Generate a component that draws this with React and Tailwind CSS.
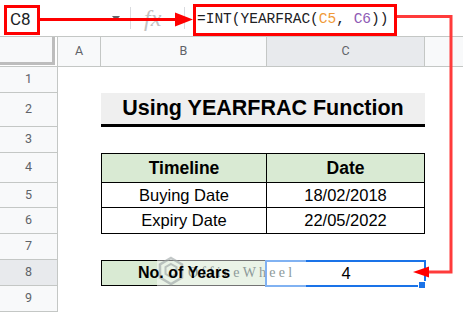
import React from "react";

function Row({ n, h, active, children }) {
  return (
    <div className={`flex ${h}`}>
      <div
        className={`w-[58px] shrink-0 flex items-center justify-center border-r border-b border-[#c4c7c5] font-['Roboto',sans-serif] text-[12.5px] text-[#5f6368] ${
          active ? "bg-[#e8eaed]" : "bg-[#f8f9fa]"
        }`}
      >
        {n}
      </div>
      <div className="w-[43px] shrink-0" />
      {children}
    </div>
  );
}

const App = () => {
  return (
    <div className="relative w-[463px] h-[313px] overflow-hidden bg-white font-['Liberation_Sans',Arial,sans-serif] text-black">
      {/* Formula bar */}
      <div className="flex h-[37px] border-b border-[#c4c7c5]">
        <div className="ml-[4px] mt-[5px] w-[36px] h-[30px] shrink-0 border-[3px] border-[#ff0000] flex items-center pl-[3px] font-['Roboto',sans-serif] text-[17px] text-[#202124]">
          C8
        </div>
        <div className="w-[90px] shrink-0 flex items-center justify-end pr-[10px]">
          <div className="w-0 h-0 border-x-[4px] border-x-transparent border-t-[5px] border-t-[#5f6368]" />
        </div>
        <div className="w-px h-[22px] self-center bg-[#dadce0]" />
        <div className="w-[53px] shrink-0 flex items-center pl-[13px] font-['Liberation_Serif',serif] italic text-[24px] text-[#c2c2c2]">
          fx
        </div>
        <div className="w-px h-[22px] self-center bg-[#dadce0]" />
        <div className="ml-[8px] mt-[4px] w-[204px] h-[32px] shrink-0 border-[3px] border-[#ff0000] flex items-center pl-[1px] font-['Liberation_Mono',monospace] text-[14.5px] text-[#202124] whitespace-pre">
          {"=INT(YEARFRAC("}
          <span className="text-[#f09a37]">C5</span>
          {", "}
          <span className="text-[#8e5bb5]">C6</span>
          {"))"}
        </div>
      </div>

      {/* Column headers */}
      <div className="flex h-[30px] border-b border-[#c4c7c5] font-['Roboto',sans-serif] text-[12.5px] text-[#5f6368]">
        <div className="w-[58px] shrink-0 border-r border-[#c4c7c5] bg-white">
          <div className="w-[55px] h-[28px] bg-[#f8f9fa] border-r-[3px] border-b-[3px] border-[#bdbdbd]" />
        </div>
        <div className="w-[43px] shrink-0 border-r border-[#c4c7c5] bg-[#f8f9fa] flex items-center justify-center">A</div>
        <div className="w-[166px] shrink-0 border-r border-[#c4c7c5] bg-[#f8f9fa] flex items-center justify-center">B</div>
        <div className="w-[158px] shrink-0 border-r border-[#c4c7c5] bg-[#e8eaed] flex items-center justify-center">C</div>
        <div className="flex-1 bg-[#f8f9fa]" />
      </div>

      <Row n={1} h="h-[26px]" />
      <Row n={2} h="h-[34px]">
        <div className="w-[324px] shrink-0 flex items-center justify-center bg-[#efefef] border-b-[3px] border-black font-bold text-[21.5px]">
          Using YEARFRAC Function
        </div>
      </Row>
      <Row n={3} h="h-[26px]" />
      <Row n={4} h="h-[30px]">
        <div className="w-[166px] shrink-0 flex items-center justify-center border border-black bg-[#d9ead3] font-bold text-[17.5px]">
          Timeline
        </div>
        <div className="w-[158px] shrink-0 flex items-center justify-center border-y border-r border-black bg-[#d9ead3] font-bold text-[17.5px]">
          Date
        </div>
      </Row>
      <Row n={5} h="h-[25px]">
        <div className="w-[166px] shrink-0 flex items-center justify-center border-x border-b border-black text-[16.5px]">
          Buying Date
        </div>
        <div className="w-[158px] shrink-0 flex items-center justify-center border-r border-b border-black text-[16.5px]">
          18/02/2018
        </div>
      </Row>
      <Row n={6} h="h-[26px]">
        <div className="w-[166px] shrink-0 flex items-center justify-center border-x border-b border-black text-[16.5px]">
          Expiry Date
        </div>
        <div className="w-[158px] shrink-0 flex items-center justify-center border-r border-b border-black text-[16.5px]">
          22/05/2022
        </div>
      </Row>
      <Row n={7} h="h-[26px]" />
      <Row n={8} h="h-[26px]" active>
        <div className="w-[166px] shrink-0 flex items-center justify-center border border-black bg-[#d9ead3] font-bold text-[16px]">
          <span className="relative z-10">No. of Years</span>
        </div>
        <div className="relative w-[158px] shrink-0 flex items-center justify-center text-[16.5px]">
          4
          <div className="absolute left-[-2px] top-0 w-[161px] h-[27px] border-2 border-[#1a73e8]" />
          <div className="absolute left-[151px] top-[21px] w-[8px] h-[8px] bg-[#1a73e8] border border-white" />
        </div>
      </Row>
      <Row n={9} h="h-[26px]" />

      {/* watermark */}
      <div className="absolute left-[157px] top-[254px] w-[149px] h-[36px] bg-white/45 flex items-center">
        <svg width="28" height="34" viewBox="0 0 28 34" className="shrink-0 opacity-60">
          <path d="M14 3 L25 9.5 V22.5 L14 29 L3 22.5 V9.5 Z" fill="none" stroke="#9aa3a3" strokeWidth="2.5" />
          <path d="M14 9 L19.5 12.2 V18.8 L14 22 L8.5 18.8 V12.2 Z" fill="none" stroke="#9aa3a3" strokeWidth="2" />
        </svg>
        <span className="ml-[3px] font-['Liberation_Serif',serif] text-[14px] tracking-[3.2px] text-[#8d9a9a]">
          OfficeWheel
        </span>
      </div>

      {/* annotation arrows */}
      <svg className="absolute left-0 top-0 pointer-events-none" width="463" height="313" viewBox="0 0 463 313">
        <rect x="40" y="18" width="138" height="3" fill="#ff0000" />
        <polygon points="175,12.5 193,19.5 175,26.5" fill="#ff0000" />
        <path d="M397 16.5 H451 V272 H428" fill="none" stroke="#ff3b3b" strokeWidth="3" />
        <polygon points="429,266.5 413,272 429,277.5" fill="#ff0000" />
      </svg>
    </div>
  );
};

export default App;
